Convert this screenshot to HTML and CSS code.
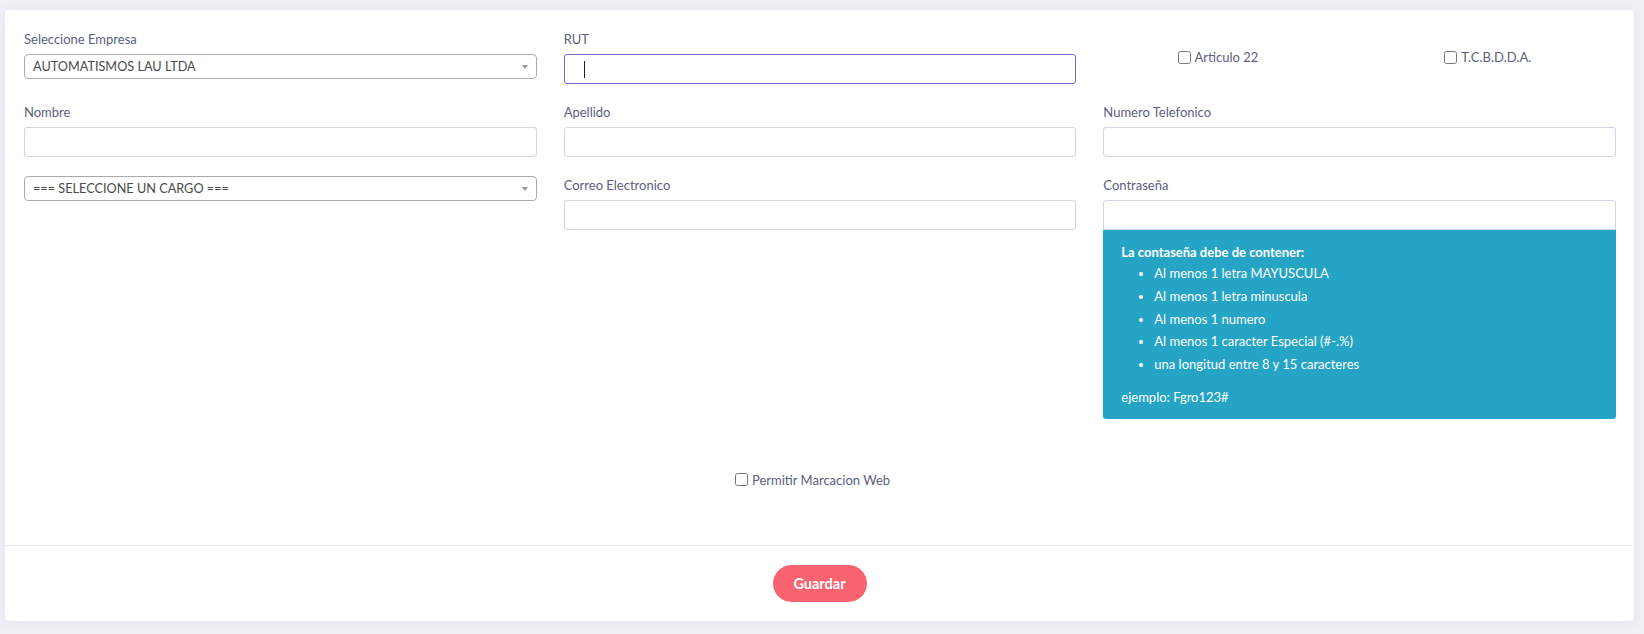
FILE: index.html
```html
<!DOCTYPE html>
<html lang="es">
<head>
<meta charset="utf-8">
<title>Formulario</title>
<link rel="stylesheet" href="styles.css">
</head>
<body>
<div class="card">
  <div class="card-body">
    <div class="row">
      <div class="group">
        <label class="lbl">Seleccione Empresa</label>
        <div class="sel"><span class="sel-text">AUTOMATISMOS LAU LTDA</span><span class="sel-arrow"></span></div>
      </div>
      <div class="group">
        <label class="lbl">RUT</label>
        <div class="input-wrap">
          <input class="input focus" type="text">
          <span class="caret"></span>
        </div>
      </div>
      <div class="checks">
        <label class="chk chk-first"><input type="checkbox">Articulo 22</label>
        <label class="chk"><input type="checkbox">T.C.B.D.D.A.</label>
      </div>
    </div>

    <div class="row">
      <div class="group">
        <label class="lbl">Nombre</label>
        <input class="input" type="text">
      </div>
      <div class="group">
        <label class="lbl">Apellido</label>
        <input class="input" type="text">
      </div>
      <div class="group">
        <label class="lbl">Numero Telefonico</label>
        <input class="input" type="text">
      </div>
    </div>

    <div class="row">
      <div class="group">
        <div class="sel sel-cargo"><span class="sel-text">=== SELECCIONE UN CARGO ===</span><span class="sel-arrow"></span></div>
      </div>
      <div class="group">
        <label class="lbl">Correo Electronico</label>
        <input class="input" type="text">
      </div>
      <div class="group group-last">
        <label class="lbl">Contraseña</label>
        <input class="input input-pass" type="password">
        <div class="hint">
          <div class="hint-title">La contaseña debe de contener:</div>
          <ul class="hint-list">
            <li>Al menos 1 letra MAYUSCULA</li>
            <li>Al menos 1 letra minuscula</li>
            <li>Al menos 1 numero</li>
            <li>Al menos 1 caracter Especial (#-.%)</li>
            <li>una longitud entre 8 y 15 caracteres</li>
          </ul>
          <div class="hint-example">ejemplo: Fgro123#</div>
        </div>
      </div>
    </div>

    <div class="web-row">
      <label class="chk chk-web"><input type="checkbox">Permitir Marcacion Web</label>
    </div>
  </div>
  <div class="card-footer">
    <button class="btn-save" type="button">Guardar</button>
  </div>
</div>
</body>
</html>
```

FILE: styles.css
```css
* { box-sizing: border-box; }

html, body { margin: 0; }

body {
  background: #f0f1f7;
  padding: 10px 10px 0 5px;
  font-family: Lato, "Liberation Sans", sans-serif;
  font-size: 13px;
  color: #575962;
  height: 634px;
  overflow: hidden;
}

.card {
  background: #ffffff;
  border-radius: 4px;
  box-shadow: 0 1px 12px rgba(69, 65, 100, 0.08);
}

.card-body {
  padding: 19px 18px 55px 19px;
}

.row {
  display: grid;
  grid-template-columns: repeat(3, 1fr);
  column-gap: 27px;
  align-items: start;
}

.group {
  margin-bottom: 18px;
}

.group-last { margin-bottom: 0; }

.lbl {
  display: block;
  line-height: 20px;
  margin-bottom: 5px;
  color: #5d6080;
  font-size: 13px;
}

.input {
  display: block;
  width: 100%;
  height: 30px;
  border: 1px solid #d3d4e8;
  border-radius: 3px;
  background: #fff;
  padding: 0 12px;
  font-family: inherit;
  font-size: 13px;
  outline: none;
}

.input.focus { border-color: #716aca; }

.input-pass { border-radius: 3px 3px 0 0; }

.input-wrap { position: relative; }

.caret {
  position: absolute;
  left: 20px;
  top: 7px;
  width: 1px;
  height: 17px;
  background: #222;
}

.sel {
  position: relative;
  height: 25px;
  border: 1px solid #aaaaaa;
  border-radius: 4px;
  background: #fff;
  display: flex;
  align-items: center;
  padding-left: 8px;
}

.sel-cargo { margin-top: 1px; }

.sel-text {
  color: #4a4a4a;
  font-size: 12.7px;
  line-height: 23px;
  white-space: nowrap;
}

.sel-arrow {
  position: absolute;
  right: 8px;
  top: 10px;
  width: 0;
  height: 0;
  border-style: solid;
  border-width: 4px 3.5px 0 3.5px;
  border-color: #999999 transparent transparent transparent;
}

.checks {
  display: grid;
  grid-template-columns: 1fr 1fr;
  padding-top: 18px;
}

.chk {
  display: flex;
  align-items: center;
  justify-content: center;
  line-height: 20px;
  font-size: 13px;
  color: #5d6080;
}

.chk input {
  margin: 0 4px 0 0;
  width: 13px;
  height: 13px;
}

.chk-first { padding-right: 27px; }

.hint {
  background: #25a4c6;
  color: #ffffff;
  border-radius: 0 0 3px 3px;
  padding: 12px 18px 12px 18px;
}

.hint-title {
  font-weight: 700;
  line-height: 20px;
}

.hint-list {
  margin: 0 0 11px 0;
  padding-left: 33px;
}

.hint-list li {
  line-height: 22.8px;
}

.hint-example { line-height: 20px; }

.web-row {
  margin-top: 51px;
  display: flex;
  justify-content: center;
}

.chk-web { padding-right: 15px; }

.card-footer {
  border-top: 1px solid #ebedf2;
  padding: 19px 0 19px 0;
  display: flex;
  justify-content: center;
}

.btn-save {
  height: 37px;
  width: 94px;
  border: none;
  border-radius: 19px;
  background: #f9636f;
  color: #ffffff;
  font-family: inherit;
  font-weight: 700;
  font-size: 14.5px;
  cursor: pointer;
}
```
